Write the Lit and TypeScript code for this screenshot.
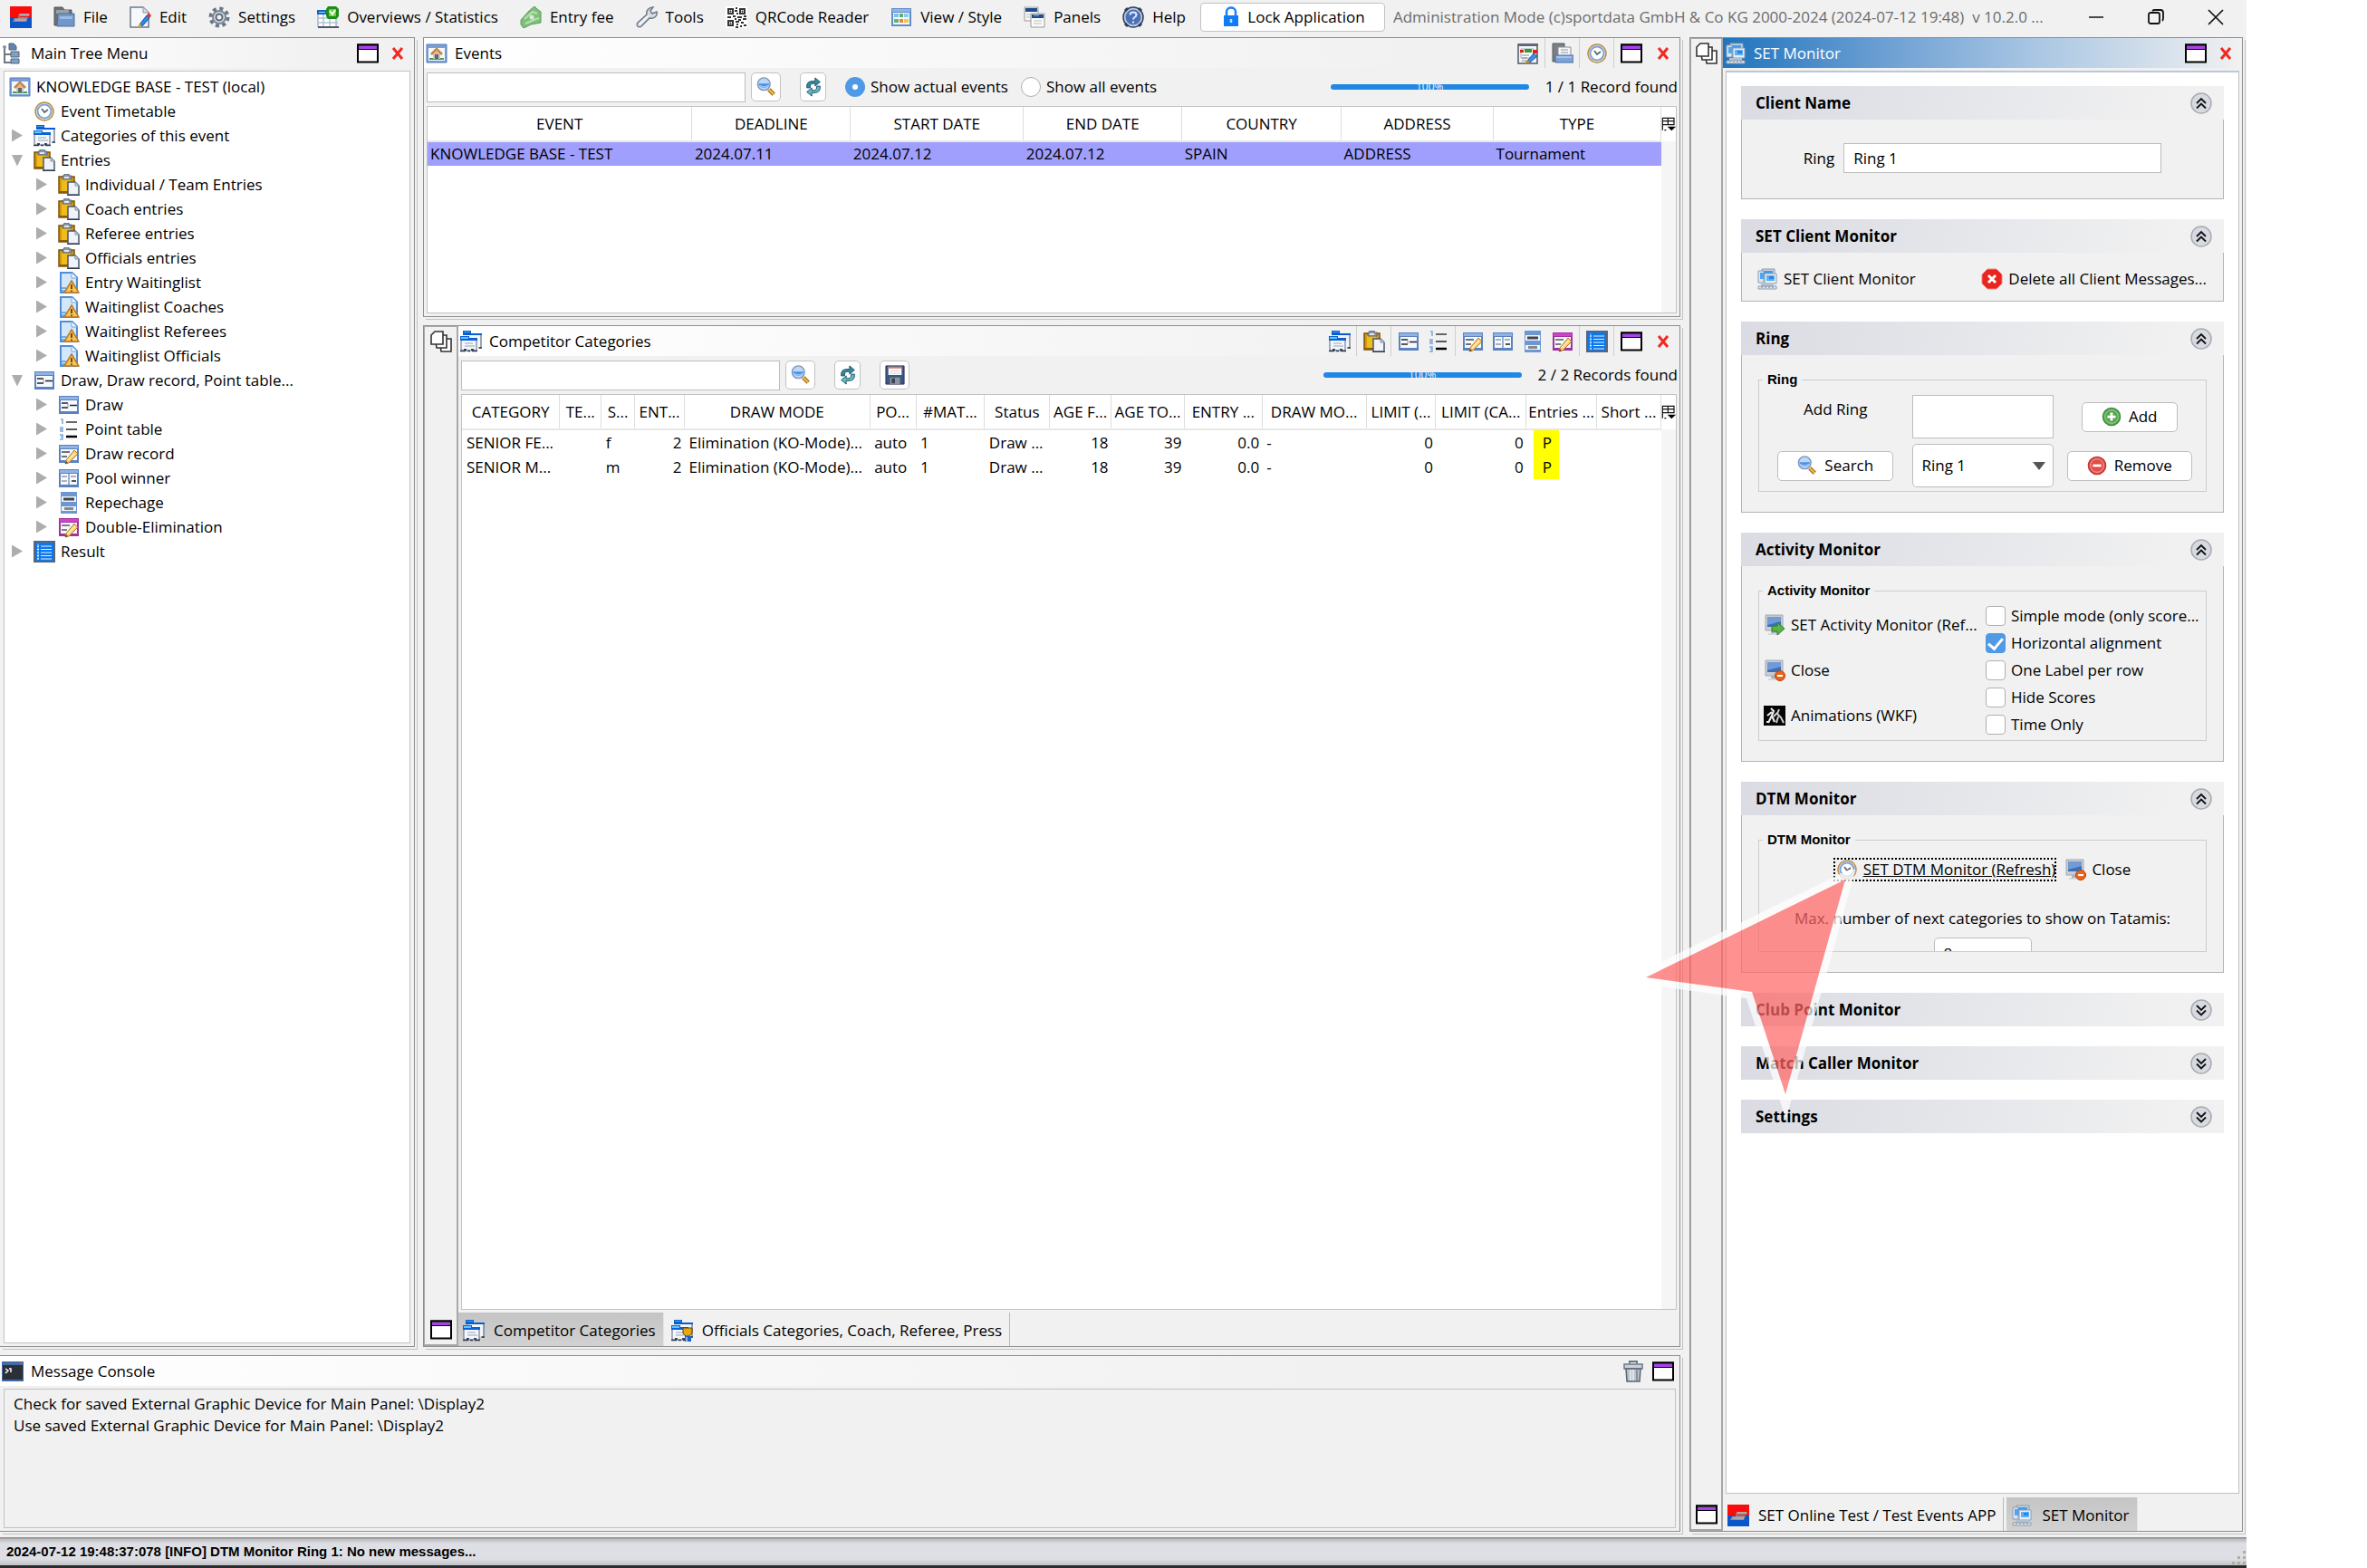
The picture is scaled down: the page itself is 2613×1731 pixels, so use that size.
import { LitElement, html, css, svg, nothing, TemplateResult } from "lit";
import { customElement, state } from "lit/decorators.js";
import { classMap } from "lit/directives/class-map.js";

/* ---------- icons, all on a 24 x 24 grid ---------- */

const pencil = svg`
  <path d="M9 19 18 8l4 4L12 22l-4 1z" fill="#f6cf73" stroke="#b5762c"/>
  <path d="M11 19l8-8" stroke="#fff0bd" stroke-width="1.5"/>
  <path d="M8 23l1-3 2 2z" fill="#6b3a17"/>`;

const windowFrame = (color: string, light: string) => svg`
  <path d="M1 2h22v20H1z" fill="${color}"/>
  <path d="M2 3h20v3H2z" fill="${light}"/>
  <path d="M3 7h18v12H3z" fill="#f6f9ff"/>`;

const brackets = svg`<path d="M4 10h7M4 15h7M13 12.500h8" stroke="#222" stroke-width="1.500"/><path d="M11 10v5" stroke="#999"/>`;

const folders = svg`
  <path d="M5 4h18v15h-3" fill="#f4f6fa" stroke="#46536a"/>
  <path d="M3 0h9v3h12v2H3z" fill="#0a5cd0"/><path d="M4 1h7v1H4z" fill="#4aa5ec"/>
  <path d="M1 9h17v13H1z" fill="#f4f6fa" stroke="#5a6780"/>
  <path d="M0 6h10v2h9v3H0z" fill="#0a62d6"/><path d="M1 7h8v2H1z" fill="#63c6f5"/>
  <path d="M5 14h9M5 17h11" stroke="#b5c0d0" stroke-width="1.500"/>
  <path d="M4 20h3v2H4zM12 20h3v2h-3z" fill="#39465b"/><path d="M0 22.500h6M8 22.500h3M13 22.500h6M21 19h3" stroke="#303b4d" stroke-width="1.500"/>`;

const clock = svg`
  <circle cx="12" cy="12" r="10" fill="#f7e7c2" stroke="#b98f4f" stroke-width="1.500"/>
  <circle cx="12" cy="12" r="7.500" fill="#fff" stroke="#7ba6dd" stroke-width="2"/>
  <path d="M9 9l3 4 4-3" fill="none" stroke="#5d6774" stroke-width="1.800"/>`;

const display = svg`
  <path d="M2 1h19v17H2z" fill="#c9cdd3" stroke="#a3a8b0"/>
  <path d="M4 3h15v11H4z" fill="#3d6fb8"/><path d="M4 3h15v5L4 12z" fill="#6f9bd8"/>
  <path d="M8 18h7v3H8z" fill="#aeb3ba"/><path d="M5 21h13v2H5z" fill="#d4d7db"/>`;

const monitors = svg`
  <path d="M6 1h14v12H6z" fill="#c6d3e0" stroke="#8b9cb0"/><path d="M8 3h10v8H8z" fill="#3f9bee"/>
  <path d="M2 3h6v13H2z" fill="#dce6f0" stroke="#8b9cb0"/><path d="M4 5h4v7H4z" fill="#4ea6f2"/>
  <path d="M9 6h13v11H9z" fill="#e6eef5" stroke="#8b9cb0"/><path d="M11 8h9v6h-9z" fill="#58b1fa"/><path d="M14 9h5v3h-5z" fill="#2f84e0"/>
  <path d="M5 17h14v3H5z" fill="#b3c0ce"/><path d="M2 20h20v3H2z" fill="#dfe6ec" stroke="#8b9cb0"/>
  <path d="M5 21h2M9 21h2M13 21h2M17 21h2" stroke="#7788a0"/>`;

const clipboard = svg`
  <path d="M1 3h17v18H1z" fill="#d59a08" stroke="#7b5208" stroke-width="1.500"/>
  <path d="M4 5h10v14H4z" fill="#f0bc1c"/><path d="M2 20h13" stroke="#8a5c05" stroke-width="2"/>
  <path d="M5 2h2V0h5v2h3v4H5z" fill="#8d99aa" stroke="#5a6678"/><path d="M7 3h5v2H7z" fill="#e2e7ee"/>
  <path d="M11 9h8l4 4v10H11z" fill="#f0f3f8" stroke="#4a566a" stroke-width="1.500"/>
  <path d="M19 9v4h4" fill="#ccd5e2" stroke="#8290a6"/><path d="M10 23.500h14" stroke="#303b4d"/>`;

const houseWindow = svg`
  <path d="M1 2h22v20H1z" fill="#7a9fd8" stroke="#557db9"/><path d="M3 6h18v14H3z" fill="#f3f8fb"/>
  <path d="M4 17h16v2H4z" fill="#4f9a45"/><path d="M8 11h8v7H8z" fill="#c9c4bd"/><path d="M10 13h4v5h-4z" fill="#5d6774"/>
  <path d="M6 13l6-6 6 6" fill="none" stroke="#c58347" stroke-width="2.500"/><path d="M12 8l3 4H9z" fill="#e9b67c"/>`;

const logo = svg`
  <path d="M0 0h24v12H0z" fill="#fb0c0c"/><path d="M0 12h24v12H0z" fill="#0a56c8"/>
  <path d="M10 8h12l-1 3H11l-1 1h10l-2 5H3l2-4h4z" fill="#9b8c90"/><path d="M11 9h10M6 15h12" stroke="#cdbfc1"/>`;

const lens = svg`
  <path d="M15 15l6 6" stroke="#9b6410" stroke-width="5"/><path d="M15 15l6 6" stroke="#f4bd45" stroke-width="2.500"/>
  <circle cx="9" cy="8.500" r="7.500" fill="#bcd8f7" stroke="#7f93b5" stroke-width="1.500"/>
  <path d="M2.500 8h13q-1 5-6.500 5t-6.500-5z" fill="#4a8fe8"/><path d="M4 10q5 4 10 0" stroke="#9cc8f8" stroke-width="1.500" fill="none"/>`;

const ICONS: Record<string, TemplateResult> = {
  logo, folders, clock, clipboard, lens, monitors,
  home: houseWindow,
  folder: svg`
    <path d="M1 1h9l2 3h8v17H1z" fill="#6d7074" stroke="#505357"/><path d="M3 4h14v4H3z" fill="#9da0a4"/>
    <path d="M5 8h18v14H4z" fill="#7298cb" stroke="#4b6f9f"/><path d="M7 11h14v3H7z" fill="#9cbbe3"/>`,
  edit: svg`
    <path d="M1 1h14l6 6v16H1z" fill="#f6f8fb" stroke="#6c7889" stroke-width="1.500"/><path d="M15 1v6h6" fill="#d7deea" stroke="#8a96a8"/>
    <path d="M11 20l8-10 3 3-8 9z" fill="#2f86e8" stroke="#1c4f92"/><path d="M19 10l2-3 3 3-2 3z" fill="#e2312a"/><path d="M9 23l2-4 3 3z" fill="#e0a32e"/>`,
  gear: svg`
    <circle cx="12" cy="12" r="9.500" fill="none" stroke="#6b7686" stroke-width="4" stroke-dasharray="4 3.460"/>
    <circle cx="12" cy="12" r="7" fill="#d8dde4" stroke="#7d8897" stroke-width="2"/>
    <circle cx="12" cy="12" r="3.500" fill="#f1f1f1" stroke="#5e6978" stroke-width="2"/>`,
  overview: svg`
    <path d="M1 5h20v18H1z" fill="#fff" stroke="#8a96a8"/><path d="M0 4h12v5H0z" fill="#1164cc"/><path d="M2 6h7v1H2z" fill="#9cd0ff"/>
    <path d="M1 13h22M1 18h22M7 9v14M14 13v10" stroke="#b3c2d6" stroke-width="1.500"/><path d="M1 23h24" stroke="#4b586c" stroke-width="2"/>
    <path d="M12 0h9l3 3v8l-3 3h-9l-2-3V3z" fill="#1c8c1a"/><path d="M13 3h8v8h-8z" fill="#6ad03a"/><path d="M14 5l3 4 3-5" fill="none" stroke="#fff" stroke-width="2"/>`,
  money: svg`
    <path d="M1 15 10 5l6-5 3 3 4 3v12L12 20l-8 4-3-4z" fill="#7fbf7b" stroke="#5a9c58"/>
    <path d="M5 14l9-8 5 2M6 19l9-4 6-2" stroke="#b6e0b1" stroke-width="2" fill="none"/><circle cx="13" cy="12" r="2.500" fill="#d5efd1"/>`,
  wrench: svg`
    <path d="M2 22c-1-1-1-3 0-4l10-9c-1-4 2-8 7-8l-3 4 2 3 5-2c1 5-3 8-8 7l-9 9c-1 1-3 1-4 0z" fill="#d7dce3" stroke="#6d7889" stroke-width="1.500"/>
    <path d="M4 20l10-10" stroke="#fff" stroke-width="1.500"/>`,
  qr: svg`
    <path d="M0 0h24v24H0z" fill="#fff"/>
    <path d="M3 3h5v5H3zM16 3h5v5h-5zM3 16h5v5H3z" fill="none" stroke="#333" stroke-width="2"/>
    <path d="M5 5h1v1H5zM18 5h1v1h-1zM5 18h1v1H5z" stroke="#333"/>
    <path d="M11 2h2M10 5h3M12 8h2M2 12h4M8 11h3M13 12h5M20 11h3M10 14h2M14 15h3M19 14h4M11 17h4M17 18h3M12 20h2M16 22h2M20 21h3M11 23h3" stroke="#333" stroke-width="2"/>`,
  view: svg`
    <path d="M1 2h22v20H1z" fill="#5f8dcc"/><path d="M2 3h20v3H2z" fill="#8fb3e4"/><path d="M3 7h18v13H3z" fill="#f6f9fd"/>
    <path d="M4 8h5v4H4z" fill="#7cc3ec"/><path d="M10 8h4v4h-4z" fill="#5fb05e"/><path d="M15 8h5v4h-5z" fill="#8fcbf0"/>
    <path d="M4 14h5v4H4z" fill="#6ab55f"/><path d="M10 14h4v4h-4z" fill="#ee7f4e"/><path d="M15 14h5v4h-5z" fill="#f3c84c"/>`,
  panels: svg`
    <path d="M1 1h15v15H1z" fill="#f7f7f5" stroke="#9a9a90"/><path d="M2 2h13v4H2z" fill="#1f4c8f"/><path d="M3 9h9M3 12h9" stroke="#b9bcc2"/>
    <path d="M8 8h15v15H8z" fill="#fbfbfa" stroke="#9a9a90"/><path d="M9 9h13v4H9z" fill="#1f4c8f"/><path d="M11 10h6" stroke="#8fc0f2"/><path d="M11 16h9M11 19h9" stroke="#b9bcc2"/>`,
  help: svg`
    <circle cx="12" cy="12" r="11" fill="#c6cedb" stroke="#2d3d5c" stroke-width="1.500"/>
    <path d="M3 5l3-3M18 2l3 3M3 19l3 3M18 22l3-3" stroke="#2d3d5c" stroke-width="3"/>
    <circle cx="12" cy="12" r="8.500" fill="#4a70b8"/>
    <path d="M8.500 9.500c0-4 7-4 7 0 0 2.500-3.500 2-3.500 5" fill="none" stroke="#dfe9f8" stroke-width="2"/><path d="M12 16.500v2" stroke="#dfe9f8" stroke-width="2"/>`,
  lock: svg`<path d="M7 11V6c0-6 10-6 10 0v5" fill="none" stroke="#1a80f8" stroke-width="2.500"/><path d="M4 10h16v12H4z" fill="#0f7bf6"/><path d="M12 14v4" stroke="#bfe0ff" stroke-width="2.500"/>`,
  minimize: svg`<path d="M4 12h16" stroke="#111" stroke-width="1.500"/>`,
  restore: svg`<rect x="4" y="7" width="12" height="12" rx="2" fill="none" stroke="#111" stroke-width="1.800"/><path d="M8 5q1-1 3-1h6q3 0 3 3v6q0 2-1 3" fill="none" stroke="#111" stroke-width="1.800"/>`,
  exit: svg`<path d="M4 4l16 16M20 4 4 20" stroke="#111" stroke-width="1.700"/>`,
  tree: svg`
    <path d="M3 5v17h7M3 13h7" fill="none" stroke="#6f7780" stroke-width="2"/><circle cx="3" cy="5" r="2" fill="#8b9299"/>
    <path d="M8 1h5l3 3v4H8z" fill="#5c86b3" stroke="#5a6570"/><path d="M10 10h9v6h-9z" fill="#79a2cd" stroke="#5a6570"/><path d="M10 18h9v5h-9z" fill="#79a2cd" stroke="#5a6570"/>`,
  maximize: svg`<path d="M1 2.500h22v19H1z" fill="#fff" stroke="#000" stroke-width="2"/><path d="M0 1.500h24v2H0z"/><path d="M2 4h20v3H2z" fill="#ab3ff0"/><path d="M1 7h22v1H1z"/>`,
  close: svg`<path d="M7 6l10 12M17 6 7 18" stroke="#f02a22" stroke-width="3"/>`,
  stack: svg`
    <path d="M10 9h13v14H12z" fill="#fff" stroke="#333" stroke-width="1.600"/><path d="M5 5h13v14H7z" fill="#fff" stroke="#333" stroke-width="1.600"/>
    <path d="M5 1h9v14H1V5z" fill="#fff" stroke="#333" stroke-width="1.600"/>`,
  report: svg`
    <path d="M1 2h21v21H1z" fill="#f4f5f7" stroke="#4c5868" stroke-width="1.500"/><path d="M1 1h22v3H1z" fill="#5d6a7c"/>
    <path d="M4 7h14v10H4z" fill="#fff" stroke="#aab"/><path d="M3 8h4v3H3zM17 8h5v4h-5z" fill="#d8221e"/><path d="M8 7h8v4H8z" fill="#2e9b2e"/>
    <path d="M5 14h8M5 17h6M5 20h5" stroke="#889"/><path d="M11 20l7-8 4 3-8 7z" fill="#3f8ce8" stroke="#2759a0"/><path d="M8 23l3-4 3 3z" fill="#c79020"/>`,
  docs: svg`
    <path d="M1 1h13v20H1z" fill="#7b7e83" stroke="#55585c"/><path d="M7 5h14v12H7z" fill="#f4f5f7" stroke="#8b9098"/><path d="M10 8h8M10 11h8" stroke="#b2b7bf" stroke-width="1.500"/>
    <path d="M4 14h20v8H4z" fill="#7da2d8" stroke="#4a70a8"/><path d="M5 16h17" stroke="#b5cdee" stroke-width="1.500"/>`,
  refresh: svg`
    <path d="M4 13q-1-8 7-8h3V1l6 5-6 5V8h-3q-3 0-3 5z" fill="#39879c" stroke="#135569"/>
    <path d="M20 11q1 8-7 8h-3v4l-6-5 6-5v3h3q3 0 3-5z" fill="#6db3c2" stroke="#135569"/>`,
  save: svg`
    <path d="M1 1h22v22H1z" fill="#3d5684" stroke="#27344f"/><path d="M4 2h16v10H4z" fill="#fafafa"/><path d="M4 2h16v2H4z" fill="#e06a5e"/>
    <path d="M6 7h12M6 10h12" stroke="#cfd3da"/><path d="M6 15h12v8H6z" fill="#8d949e"/><path d="M8 16h4v6H8z" fill="#3c434e"/>`,
  draw: svg`${windowFrame("#5b82be", "#8fb3e6")}${brackets}`,
  drawRecord: svg`${windowFrame("#5b82be", "#8fb3e6")}<path d="M4 10h9M4 15h6" stroke="#444" stroke-width="1.500"/>${pencil}`,
  doubleElimination: svg`${windowFrame("#a2319e", "#d243cd")}<path d="M4 10h9M4 15h6" stroke="#555" stroke-width="1.500"/>${pencil}`,
  pool: svg`${windowFrame("#5b82be", "#8fb3e6")}<path d="M12 7v12" stroke="#7796c6" stroke-width="1.500"/><path d="M4 10h6M4 15h6M14 10h6" stroke="#999" stroke-width="1.500"/><path d="M15 15h5" stroke="#555" stroke-width="2"/>`,
  repechage: svg`
    <path d="M3 0h18v24H3z" fill="#6d97d2"/><path d="M4 5h16v6H4zM4 16h16v5H4z" fill="#eef4fc"/>
    <path d="M6 8h12" stroke="#444" stroke-width="3"/><path d="M7 18.500h10" stroke="#888" stroke-width="3"/>`,
  points: svg`
    <path d="M3 1h2v5M2 10h3v2H3v2h3M2 18h3v2H3h2v3H2" fill="none" stroke="#7ea6dc" stroke-width="1.500"/>
    <path d="M9 4h12" stroke="#666" stroke-width="2"/><path d="M9 12h12" stroke="#222" stroke-width="1.500"/><path d="M9 20h12" stroke="#000" stroke-width="2.500"/>`,
  waiting: svg`
    <path d="M2 0h14l6 6v18H2z" fill="#4f8ed6"/><path d="M4 2h11l5 5v15H4z" fill="#d4e7fa"/><path d="M15 1v6h6" fill="#f4faff" stroke="#6ea5e0"/>
    <path d="M4 18h5M4 21h5" stroke="#4f9be8" stroke-width="1.500"/>
    <path d="M15 10l8 13H7z" fill="#f6c452" stroke="#b9792b" stroke-width="1.500"/><path d="M15 14v5M15 20.500v1.500" stroke="#7a4511" stroke-width="2"/>`,
  result: svg`
    <path d="M1 1h22v22H1z" fill="#0d78ec" stroke="#5b6675" stroke-width="2"/><path d="M5 3v18" stroke="#8cc2fb"/>
    <path d="M8 6h12M8 9.500h12M8 13h12M8 16.500h12M8 20h12" stroke="#eaf4ff" stroke-width="1.200"/><path d="M4 6h2M4 9.500h2M4 13h2M4 16.500h2M4 20h2" stroke="#fff" stroke-width="1.200"/>`,
  officials: svg`${folders}<path d="M13 9h10v6l-3 3h-4l-3-3z" fill="#e5a812" stroke="#5e4306"/><path d="M15 18h7v6h-7z" fill="#1a66c8"/><path d="M17 19v5" stroke="#fff"/>`,
  console: svg`<path d="M0 1h24v22H0z" fill="#426ca8"/><path d="M1 5h22v16H1z" fill="#2b3036"/><path d="M20 3h2" stroke="#f04040" stroke-width="2"/><path d="M4 9l3 2-3 3M8 9h2v4" stroke="#fff" stroke-width="1.500" fill="none"/>`,
  trash: svg`
    <path d="M8 3V1h8v2" fill="none" stroke="#6d7783" stroke-width="2"/><path d="M2 4h20v5H2z" fill="#cbd1d9" stroke="#6d7783" stroke-width="1.500"/>
    <path d="M4 9h16l-1 14H5z" fill="#b9c1cb" stroke="#5c6673" stroke-width="1.500"/><path d="M9 10v12M12 10v12" stroke="#eef1f4" stroke-width="1.500"/><path d="M16 10v12" stroke="#77828f" stroke-width="1.500"/>`,
  columns: svg`<path d="M2 2h19v11H2zM2 7h19M11 2v11M2 13v9M5 22h3" fill="none" stroke="#111" stroke-width="1.800"/><path d="M10 16h14l-7 7z"/>`,
  error: svg`<path d="M7 1h10l6 6v10l-6 6H7l-6-6V7z" fill="#e8251f" stroke="#f4837d"/><path d="M8 8l8 8M16 8l-8 8" stroke="#fff" stroke-width="3"/>`,
  add: svg`<circle cx="12" cy="12" r="10.500" fill="#56a552" stroke="#3f8f3d" stroke-width="1.500"/><circle cx="12" cy="12" r="8" fill="none" stroke="#a8d8a3"/><path d="M12 7v10M7 12h10" stroke="#fff" stroke-width="3"/>`,
  remove: svg`<circle cx="12" cy="12" r="10.500" fill="#df4f4a" stroke="#c23733" stroke-width="1.500"/><circle cx="12" cy="12" r="8" fill="none" stroke="#f3aaa6"/><path d="M7 12h10" stroke="#fff" stroke-width="3"/>`,
  displayGo: svg`${display}<path d="M9 13h6v-4l8 7-8 7v-4H9z" fill="#5ab04b" stroke="#2f7f28"/>`,
  displayStop: svg`${display}<circle cx="18" cy="18" r="5.500" fill="#e8641c" stroke="#b8440b"/><path d="M15 18h6" stroke="#fff" stroke-width="2"/>`,
  animation: svg`
    <path d="M0 1h24v22H0z" fill="#050505"/><path d="M8 4l3 3-2 5 3 7M9 8l-5 4M9 12l-4 8M3 19h3" stroke="#e8e8e8" stroke-width="2.200" fill="none"/>
    <path d="M17 5l-2 5 4 4 3 6M15 9l-4 4M16 13l-2 7" stroke="#cfcfcf" stroke-width="2" fill="none"/>`,
  up: svg`<circle cx="12" cy="12" r="11" fill="#d8dae2" stroke="#a9abb2" stroke-width="1.500"/><path d="M7 12l5-5 5 5M7 17.500l5-5 5 5" fill="none" stroke="#111" stroke-width="1.800"/>`,
  down: svg`<circle cx="12" cy="12" r="11" fill="#d8dae2" stroke="#a9abb2" stroke-width="1.500"/><path d="M7 7l5 5 5-5M7 12.500l5 5 5-5" fill="none" stroke="#111" stroke-width="1.800"/>`,
};

const icon = (name: string) =>
  html`<svg class="icon" viewBox="0 0 24 24" aria-hidden="true">${ICONS[name]}</svg>`;

const iconButton = (name: string, label: string) =>
  html`<button class="tool" type="button" aria-label=${label}>${icon(name)}</button>`;

/* ---------- data ---------- */

const MENU: [string, string][] = [
  ["folder", "File"], ["edit", "Edit"], ["gear", "Settings"], ["overview", "Overviews / Statistics"],
  ["money", "Entry fee"], ["wrench", "Tools"], ["qr", "QRCode Reader"], ["view", "View / Style"],
  ["panels", "Panels"], ["help", "Help"],
];

interface Node { level: number; icon: string; label: string; arrow?: "open" | "closed" }

const TREE: Node[] = [
  { level: 0, icon: "home", label: "KNOWLEDGE BASE - TEST (local)" },
  { level: 1, icon: "clock", label: "Event Timetable" },
  { level: 1, icon: "folders", label: "Categories of this event", arrow: "closed" },
  { level: 1, icon: "clipboard", label: "Entries", arrow: "open" },
  { level: 2, icon: "clipboard", label: "Individual / Team Entries", arrow: "closed" },
  { level: 2, icon: "clipboard", label: "Coach entries", arrow: "closed" },
  { level: 2, icon: "clipboard", label: "Referee entries", arrow: "closed" },
  { level: 2, icon: "clipboard", label: "Officials entries", arrow: "closed" },
  { level: 2, icon: "waiting", label: "Entry Waitinglist", arrow: "closed" },
  { level: 2, icon: "waiting", label: "Waitinglist Coaches", arrow: "closed" },
  { level: 2, icon: "waiting", label: "Waitinglist Referees", arrow: "closed" },
  { level: 2, icon: "waiting", label: "Waitinglist Officials", arrow: "closed" },
  { level: 1, icon: "draw", label: "Draw, Draw record, Point table...", arrow: "open" },
  { level: 2, icon: "draw", label: "Draw", arrow: "closed" },
  { level: 2, icon: "points", label: "Point table", arrow: "closed" },
  { level: 2, icon: "drawRecord", label: "Draw record", arrow: "closed" },
  { level: 2, icon: "pool", label: "Pool winner", arrow: "closed" },
  { level: 2, icon: "repechage", label: "Repechage", arrow: "closed" },
  { level: 2, icon: "doubleElimination", label: "Double-Elimination", arrow: "closed" },
  { level: 1, icon: "result", label: "Result", arrow: "closed" },
];

interface Column { title: string; width: number; align?: "right" | "tag" }

const EVENT_COLUMNS: Column[] = [
  { title: "EVENT", width: 292 }, { title: "DEADLINE", width: 175 }, { title: "START DATE", width: 191 },
  { title: "END DATE", width: 175 }, { title: "COUNTRY", width: 176 }, { title: "ADDRESS", width: 168 },
  { title: "TYPE", width: 185 },
];
const EVENT_ROWS = [["KNOWLEDGE BASE - TEST", "2024.07.11", "2024.07.12", "2024.07.12", "SPAIN", "ADDRESS", "Tournament"]];

const CATEGORY_COLUMNS: Column[] = [
  { title: "CATEGORY", width: 108 }, { title: "TE...", width: 46 }, { title: "S...", width: 37 },
  { title: "ENT...", width: 55, align: "right" }, { title: "DRAW MODE", width: 205 }, { title: "PO...", width: 51 },
  { title: "#MAT...", width: 76 }, { title: "Status", width: 72 }, { title: "AGE F...", width: 68, align: "right" },
  { title: "AGE TO...", width: 81, align: "right" }, { title: "ENTRY ...", width: 86, align: "right" },
  { title: "DRAW MO...", width: 115 }, { title: "LIMIT (...", width: 77, align: "right" },
  { title: "LIMIT (CA...", width: 100, align: "right" }, { title: "Entries ...", width: 78, align: "tag" },
  { title: "Short ...", width: 71 },
];
const categoryRow = (name: string, sex: string) =>
  [name, "", sex, "2", "Elimination (KO-Mode)...", "auto", "1", "Draw ...", "18", "39", "0.0", "-", "0", "0", "P", ""];
const CATEGORY_ROWS = [categoryRow("SENIOR FE...", "f"), categoryRow("SENIOR M...", "m")];

const CATEGORY_TOOLS: [string, string][][] = [
  [["folders", "Categories"]],
  [["clipboard", "Entries"]],
  [["draw", "Draw"], ["points", "Point table"]],
  [["drawRecord", "Draw record"], ["pool", "Pool winner"], ["repechage", "Repechage"], ["doubleElimination", "Double-Elimination"]],
  [["result", "Result"]],
];

const ACTIVITY_OPTIONS = ["Simple mode (only score...", "Horizontal alignment", "One Label per row", "Hide Scores", "Time Only"];

@customElement("app-root")
export class AppRoot extends LitElement {
  @state() private enabled = new Set([1]);

  static styles = css`
    :host {
      display: block;
      background: #fff;
      color: #000;
      font: 17px/24px "Open Sans", "Noto Sans", sans-serif;
    }
    * { box-sizing: border-box; }
    button, input, select { font: inherit; color: inherit; margin: 0; border-radius: 0; }
    button { display: inline-flex; align-items: center; padding: 0; border: 0; background: none; white-space: nowrap; }
    .icon { display: block; width: 24px; height: 24px; flex: none; }

    .window {
      display: flex; flex-direction: column;
      height: 100vh; margin-right: 133px;
      background: #f1f1f1; border-bottom: 3px solid #2b2b2d;
    }

    /* menu bar */
    .menubar { display: flex; align-items: center; height: 41px; flex: none; padding: 0 14px 3px 11px; }
    .menubar nav { display: flex; gap: 24px; margin: 0 16px 0 24px; }
    .menubar nav button { gap: 9px; }
    .lock { width: 204px; height: 32px; justify-content: center; gap: 6px; background: #fff; border: 1px solid #c2c2c2; border-radius: 4px; }
    .mode { flex: 1; min-width: 0; margin-left: 9px; color: #6c6c6c; white-space: pre; overflow: hidden; }
    .caption { display: flex; gap: 33px; padding-right: 4px; }

    /* docking areas */
    .work { display: flex; flex: 1; min-height: 0; gap: 7px; padding-bottom: 6px; }
    .main { flex: 1; min-width: 0; display: flex; flex-direction: column; gap: 9px; }
    .upper { flex: 1; min-height: 0; display: flex; gap: 9px; }
    .center { flex: 1; min-width: 0; display: flex; flex-direction: column; gap: 9px; }
    .panel {
      display: flex; min-width: 0; background: #f1f1f1;
      border: 1px solid #8f8f8f;
      box-shadow: 2px 2px 0 #f1f1f1, 3px 3px 0 #c2c2c2;
    }
    .flush { border-left: 0; }
    .side { width: 458px; flex: none; }
    .events { flex: none; height: 309px; margin-right: 3px; }
    .categories { flex: 1; min-height: 0; margin-right: 3px; }
    .console { flex: none; height: 195px; margin-right: 3px; }
    .monitor { width: 611px; flex: none; margin-right: 4px; }
    .rail {
      width: 36px; flex: none; display: flex; flex-direction: column; align-items: center; justify-content: space-between;
      padding: 4px 0; border: 2px solid #a8a8a8; border-width: 1px 2px 2px 1px;
    }
    .categories .rail { width: 38px; }
    .pane { flex: 1; min-width: 0; display: flex; flex-direction: column; }
    .head {
      display: flex; align-items: center; height: 33px; flex: none; padding: 0 2px;
      background: linear-gradient(90deg, #fff, #f1f1f1 80%);
    }
    .head h2 { flex: 1; margin: 0 0 0 8px; font: inherit; }
    .active { background: linear-gradient(90deg, #1f74bd, #6a9ed2 30%, #a9c6e3 60%, #f1f1f1); }
    .active h2 { color: #fff; }
    .group { display: flex; align-self: stretch; align-items: center; padding: 0 2px; border-left: 1px solid #cfcfcf; }
    .group:first-of-type { border-left: 0; }
    .tool { width: 33px; justify-content: center; }

    .box { flex: 1; min-height: 0; background: #fff; border: 1px solid #c2c2c2; margin: 3px 4px; }

    /* tree */
    .tree { list-style: none; margin: 0; padding: 3px 0 0; }
    .tree li { display: flex; align-items: center; gap: 6px; height: 27px; padding-left: 5px; white-space: nowrap; }
    .tree .level1 { padding-left: 8px; }
    .tree .level2 { padding-left: 35px; }
    .twist { width: 12px; height: 14px; margin-right: 6px; background: #adadad; clip-path: polygon(0 0, 100% 50%, 0 100%); }
    .twist.open { clip-path: polygon(0 10%, 100% 10%, 50% 100%); }
    .twist.none { visibility: hidden; }

    /* search rows */
    .filter { display: flex; align-items: center; height: 42px; flex: none; padding: 0 2px 0 3px; }
    .filter .field { width: 352px; height: 33px; }
    .field { background: #fff; border: 1px solid #bdbdbd; padding: 0 10px; min-width: 0; outline: 0; }
    .square { width: 33px; height: 32px; margin-left: 6px; justify-content: center; background: #fff; border: 1px solid #c2c2c2; border-radius: 5px; }
    .square + .square { margin-left: 21px; width: 29px; }
    .square + .square + .square { width: 33px; }
    .square .icon { width: 22px; height: 22px; }
    .choice { display: inline-flex; align-items: center; gap: 6px; white-space: nowrap; }
    .choices { display: flex; gap: 14px; margin-left: 21px; }
    input[type="radio"], input[type="checkbox"] {
      appearance: none; display: grid; place-items: center; flex: none;
      width: 22px; height: 22px; background: #fff; border: 1px solid #b0b0b0; border-radius: 50%;
    }
    input[type="radio"]:checked { border: 8px solid #4f9ae6; }
    input[type="checkbox"] { border-radius: 4px; }
    input[type="checkbox"]:checked { background: #4f9ae6; border-color: #4f9ae6; }
    input[type="checkbox"]:checked::after {
      content: ""; width: 7px; height: 13px; margin-bottom: 3px;
      border: solid #fff; border-width: 0 3px 3px 0; rotate: 40deg;
    }
    .found { display: flex; align-items: center; gap: 18px; margin-left: auto; white-space: nowrap; }
    .progress { width: 219px; height: 6px; border-radius: 3px; background: #2187e4; color: #f1f1f1; font-size: 12px; line-height: 6px; text-align: center; }

    /* tables */
    .grid { display: flex; flex: 1; min-height: 0; margin: 0 3px 3px; background: #fff; border: 1px solid #c2c2c2; }
    .grid table { flex: 1; width: 100%; table-layout: fixed; border-collapse: collapse; align-self: flex-start; }
    th, td { padding: 0; font-weight: 400; white-space: nowrap; overflow: hidden; text-align: left; }
    th { height: 38px; text-align: center; border-right: 1px solid #dedede; border-bottom: 2px solid #e8e8e8; }
    td { height: 27px; padding-left: 5px; }
    td.right { text-align: right; padding: 0 3px 0 0; }
    td.tag { padding-left: 8px; }
    td.tag span { display: block; width: 28px; height: 27px; padding-left: 10px; line-height: 27px; background: #ff0; }
    .events-table td { padding-left: 3px; }
    .events-table tbody tr { background: #a09ffd; }
    .gutter { width: 16px; flex: none; background: #f5f5f5; }
    .gutter button { width: 16px; height: 38px; background: #fff; }
    .gutter .icon { width: 16px; height: 16px; }

    /* bottom tabs */
    .tabs { display: flex; align-items: stretch; height: 37px; flex: none; gap: 3px; }
    .tab { gap: 10px; padding: 2px 8px 0 5px; border-right: 1px solid #b9b9b9; }
    .tab.on { background: linear-gradient(#c4c4c4, #d2d2d2); border-right: 1px solid #e4e4e4; }

    .log { padding: 4px 10px; background: #f1f1f1; white-space: pre; }
    .status {
      display: flex; align-items: center; justify-content: space-between; height: 31px; flex: none; padding: 0 0 0 7px;
      font: bold 15px/18px "Liberation Sans", sans-serif;
      background: linear-gradient(#8f8f8f 0 1px, #b9b9bd 2px, #dedfe4 7px, #dedfe4 24px, #c0c1c6);
    }
    .grip { width: 18px; height: 18px; align-self: flex-end; }

    /* monitor sections */
    .sections { display: flex; flex-direction: column; gap: 22px; padding: 15px 16px; margin: 3px 3px 4px; border-top: 2px solid #b9c6dc; }
    .section { position: relative; }
    .bar { display: flex; align-items: center; justify-content: space-between; height: 37px; padding: 0 13px 0 16px; background: linear-gradient(100deg, #dbdce3, #e4e6ea 45%, #f1f1f1 90%); }
    .bar h3 { margin: 0; font: bold 17px/24px "Open Sans", "Noto Sans", sans-serif; }
    .body { background: #f1f1f1; border: 1px solid #b4b4b4; border-top: 0; }
    .client { display: flex; justify-content: center; align-items: center; gap: 10px; padding: 26px 0 28px; }
    .client .field { width: 351px; height: 33px; }
    .links { display: flex; justify-content: space-between; padding: 17px 18px 12px 16px; }
    .link { gap: 6px; height: 24px; }
    fieldset { min-width: 0; margin: 0 18px; padding: 0; border: 1px solid #cdcdcd; }
    legend { margin-left: 4px; padding: 0 5px; font: bold 15px/18px "Liberation Sans", sans-serif; }
    .fields { padding: 18px 0 22px; }
    .ring { display: grid; grid-template-columns: 1fr 156px 1fr; gap: 6px 0; padding: 8px 0 4px; align-items: center; justify-items: center; }
    .ring .field { width: 156px; height: 48px; }
    .ring label { align-self: start; padding-top: 4px; }
    .button { height: 33px; gap: 8px; justify-content: center; padding: 0 21px; background: #fff; border: 1px solid #bdbdbd; border-radius: 5px; }
    .button .icon { width: 22px; height: 22px; }
    .select { position: relative; }
    .select::after { content: ""; position: absolute; right: 9px; top: 20px; border: 7px solid transparent; border-top: 9px solid #555; border-bottom: 0; pointer-events: none; }
    select.field { appearance: none; display: block; border-radius: 5px; }
    .activity { display: grid; grid-template-columns: 1fr 243px; padding: 4px 0 2px 5px; }
    .actions { display: grid; grid-auto-rows: 50px; align-items: center; justify-items: start; min-width: 0; }
    .options { display: grid; grid-auto-rows: 30px; align-items: center; justify-items: start; }
    .dtm { display: flex; flex-direction: column; align-items: center; height: 114px; padding-top: 12px; overflow: hidden; }
    .row { display: flex; gap: 10px; }
    .focused { text-decoration: underline; outline: 2px dotted #000; outline-offset: -1px; padding-left: 2px; }
    .dtm p { margin: 30px 0 9px; white-space: nowrap; }
    .count { width: 108px; height: 34px; flex: none; border-radius: 5px; }
    .pointer { position: absolute; left: -125px; top: 97px; width: 270px; height: 290px; z-index: 2; pointer-events: none; }
  `;

  private toggle(index: number) {
    const next = new Set(this.enabled);
    next.has(index) ? next.delete(index) : next.add(index);
    this.enabled = next;
  }

  private table(columns: Column[], rows: string[][], className: string, label: string) {
    const total = columns.reduce((sum, column) => sum + column.width, 0);
    return html`
      <div class="grid">
        <table class=${className} aria-label=${label}>
          <colgroup>${columns.map((c) => html`<col style="width:${(c.width / total) * 100}%">`)}</colgroup>
          <thead><tr>${columns.map((c) => html`<th scope="col">${c.title}</th>`)}</tr></thead>
          <tbody>${rows.map((row) => html`<tr>${row.map((value, i) => html`
            <td class=${columns[i].align ?? ""}>${columns[i].align === "tag" ? html`<span>${value}</span>` : value}</td>`)}</tr>`)}
          </tbody>
        </table>
        <div class="gutter"><button type="button" aria-label="Choose columns">${icon("columns")}</button></div>
      </div>`;
  }

  private found(text: string) {
    return html`<div class="found"><div class="progress" role="progressbar" aria-valuenow="100">100%</div><span>${text}</span></div>`;
  }

  private section(title: string, open: boolean, body: unknown = nothing, overlay: unknown = nothing) {
    return html`
      <section class="section">
        <div class="bar"><h3>${title}</h3>
          <button type="button" aria-label=${title} aria-expanded=${open}>${icon(open ? "up" : "down")}</button>
        </div>
        ${open ? html`<div class="body">${body}</div>` : nothing}
        ${overlay}
      </section>`;
  }

  private renderMenu() {
    return html`
      <header class="menubar">
        ${icon("logo")}
        <nav>${MENU.map(([name, label]) => html`<button type="button">${icon(name)}${label}</button>`)}</nav>
        <button class="lock" type="button">${icon("lock")}Lock Application</button>
        <span class="mode">Administration Mode (c)sportdata GmbH &amp; Co KG 2000-2024 (2024-07-12 19:48)  v 10.2.0 ...</span>
        <div class="caption">
          ${iconButton("minimize", "Minimize")}${iconButton("restore", "Restore")}${iconButton("exit", "Exit")}
        </div>
      </header>`;
  }

  private renderTree() {
    return html`
      <aside class="panel flush side"><div class="pane">
        <div class="head">${icon("tree")}<h2>Main Tree Menu</h2>${iconButton("maximize", "Maximize")}${iconButton("close", "Close")}</div>
        <div class="box"><ul class="tree">
          ${TREE.map((n) => html`<li class="level${n.level}">
            ${n.level ? html`<span class=${classMap({ twist: true, open: n.arrow === "open", none: !n.arrow })}></span>` : nothing}
            ${icon(n.icon)}<span>${n.label}</span></li>`)}
        </ul></div>
      </div></aside>`;
  }

  private renderEvents() {
    return html`
      <section class="panel events"><div class="pane">
        <div class="head">${icon("home")}<h2>Events</h2>
          <div class="group">${iconButton("report", "Report")}</div>
          <div class="group">${iconButton("docs", "Documents")}</div>
          <div class="group">${iconButton("clock", "Timetable")}</div>
          <div class="group">${iconButton("maximize", "Maximize")}</div>${iconButton("close", "Close")}
        </div>
        <div class="filter">
          <input class="field" type="text" aria-label="Search events">
          <button class="square" type="button" aria-label="Search">${icon("lens")}</button>
          <button class="square" type="button" aria-label="Refresh">${icon("refresh")}</button>
          <div class="choices">
            <label class="choice"><input type="radio" name="scope" checked>Show actual events</label>
            <label class="choice"><input type="radio" name="scope">Show all events</label>
          </div>
          ${this.found("1 / 1 Record found")}
        </div>
        ${this.table(EVENT_COLUMNS, EVENT_ROWS, "events-table", "Events")}
      </div></section>`;
  }

  private renderCategories() {
    return html`
      <section class="panel categories">
        <div class="rail">${iconButton("stack", "Stacked panels")}${iconButton("maximize", "Maximize")}</div>
        <div class="pane">
          <div class="head">${icon("folders")}<h2>Competitor Categories</h2>
            ${CATEGORY_TOOLS.map((group) => html`<div class="group">${group.map(([name, label]) => iconButton(name, label))}</div>`)}
            <div class="group">${iconButton("maximize", "Maximize")}</div>${iconButton("close", "Close")}
          </div>
          <div class="filter">
            <input class="field" type="text" aria-label="Search categories">
            <button class="square" type="button" aria-label="Search">${icon("lens")}</button>
            <button class="square" type="button" aria-label="Refresh">${icon("refresh")}</button>
            <button class="square" type="button" aria-label="Save">${icon("save")}</button>
            ${this.found("2 / 2 Records found")}
          </div>
          ${this.table(CATEGORY_COLUMNS, CATEGORY_ROWS, "categories-table", "Competitor Categories")}
          <div class="tabs">
            <button class="tab on" type="button">${icon("folders")}Competitor Categories</button>
            <button class="tab" type="button">${icon("officials")}Officials Categories, Coach, Referee, Press</button>
          </div>
        </div>
      </section>`;
  }

  private renderMonitor() {
    return html`
      <section class="panel monitor">
        <div class="rail">${iconButton("stack", "Stacked panels")}${iconButton("maximize", "Maximize")}</div>
        <div class="pane">
          <div class="head active">${icon("monitors")}<h2>SET Monitor</h2>${iconButton("maximize", "Maximize")}${iconButton("close", "Close")}</div>
          <div class="box sections">
            ${this.section("Client Name", true, html`
              <div class="client"><label for="client">Ring</label><input class="field" id="client" type="text" value="Ring 1"></div>`)}
            ${this.section("SET Client Monitor", true, html`
              <div class="links">
                <button class="link" type="button">${icon("monitors")}SET Client Monitor</button>
                <button class="link" type="button">${icon("error")}Delete all Client Messages...</button>
              </div>`)}
            ${this.section("Ring", true, html`
              <div class="fields"><fieldset><legend>Ring</legend><div class="ring">
                <label for="add-ring">Add Ring</label>
                <input class="field" id="add-ring" type="text">
                <button class="button" type="button">${icon("add")}Add</button>
                <button class="button" type="button">${icon("lens")}Search</button>
                <div class="select"><select class="field" aria-label="Ring"><option>Ring 1</option></select></div>
                <button class="button" type="button">${icon("remove")}Remove</button>
              </div></fieldset></div>`)}
            ${this.section("Activity Monitor", true, html`
              <div class="fields"><fieldset><legend>Activity Monitor</legend><div class="activity">
                <div class="actions">
                  <button class="link" type="button">${icon("displayGo")}SET Activity Monitor (Ref...</button>
                  <button class="link" type="button">${icon("displayStop")}Close</button>
                  <button class="link" type="button">${icon("animation")}Animations (WKF)</button>
                </div>
                <div class="options">${ACTIVITY_OPTIONS.map((label, i) => html`
                  <label class="choice"><input type="checkbox" .checked=${this.enabled.has(i)} @change=${() => this.toggle(i)}>${label}</label>`)}
                </div>
              </div></fieldset></div>`)}
            ${this.section("DTM Monitor", true, html`
              <div class="fields"><fieldset><legend>DTM Monitor</legend><div class="dtm">
                <div class="row">
                  <button class="link focused" type="button">${icon("clock")}SET DTM Monitor (Refresh)</button>
                  <button class="link" type="button">${icon("displayStop")}Close</button>
                </div>
                <p id="max-label">Max. number of next categories to show on Tatamis:</p>
                <input class="field count" type="text" value="8" aria-labelledby="max-label">
              </div></fieldset></div>`, html`
              <svg class="pointer" viewBox="0 0 270 290" aria-hidden="true">
                <g opacity="0.72"><path d="M240 11 20 119l117 16 37 113z" fill="#ff6766" stroke="#fff" stroke-width="16" stroke-miterlimit="10" paint-order="stroke"/></g>
              </svg>`)}
            ${this.section("Club Point Monitor", false)}
            ${this.section("Match Caller Monitor", false)}
            ${this.section("Settings", false)}
          </div>
          <div class="tabs">
            <button class="tab" type="button">${icon("logo")}SET Online Test / Test Events APP</button>
            <button class="tab on" type="button">${icon("monitors")}SET Monitor</button>
          </div>
        </div>
      </section>`;
  }

  render() {
    return html`
      <div class="window">
        ${this.renderMenu()}
        <div class="work">
          <div class="main">
            <div class="upper">
              ${this.renderTree()}
              <div class="center">${this.renderEvents()}${this.renderCategories()}</div>
            </div>
            <section class="panel flush console"><div class="pane">
              <div class="head">${icon("console")}<h2>Message Console</h2>${iconButton("trash", "Clear")}${iconButton("maximize", "Maximize")}</div>
              <div class="box log">Check for saved External Graphic Device for Main Panel: \\Display2
Use saved External Graphic Device for Main Panel: \\Display2</div>
            </div></section>
          </div>
          ${this.renderMonitor()}
        </div>
        <footer class="status">
          <span>2024-07-12 19:48:37:078 [INFO] DTM Monitor Ring 1: No new messages...</span>
          <svg class="grip" viewBox="0 0 18 18" aria-hidden="true"><path d="M14 2h3v3h-3zM14 8h3v3h-3zM8 8h3v3H8zM14 14h3v3h-3zM8 14h3v3H8zM2 14h3v3H2z" fill="#b0aca0"/></svg>
        </footer>
      </div>`;
  }
}
